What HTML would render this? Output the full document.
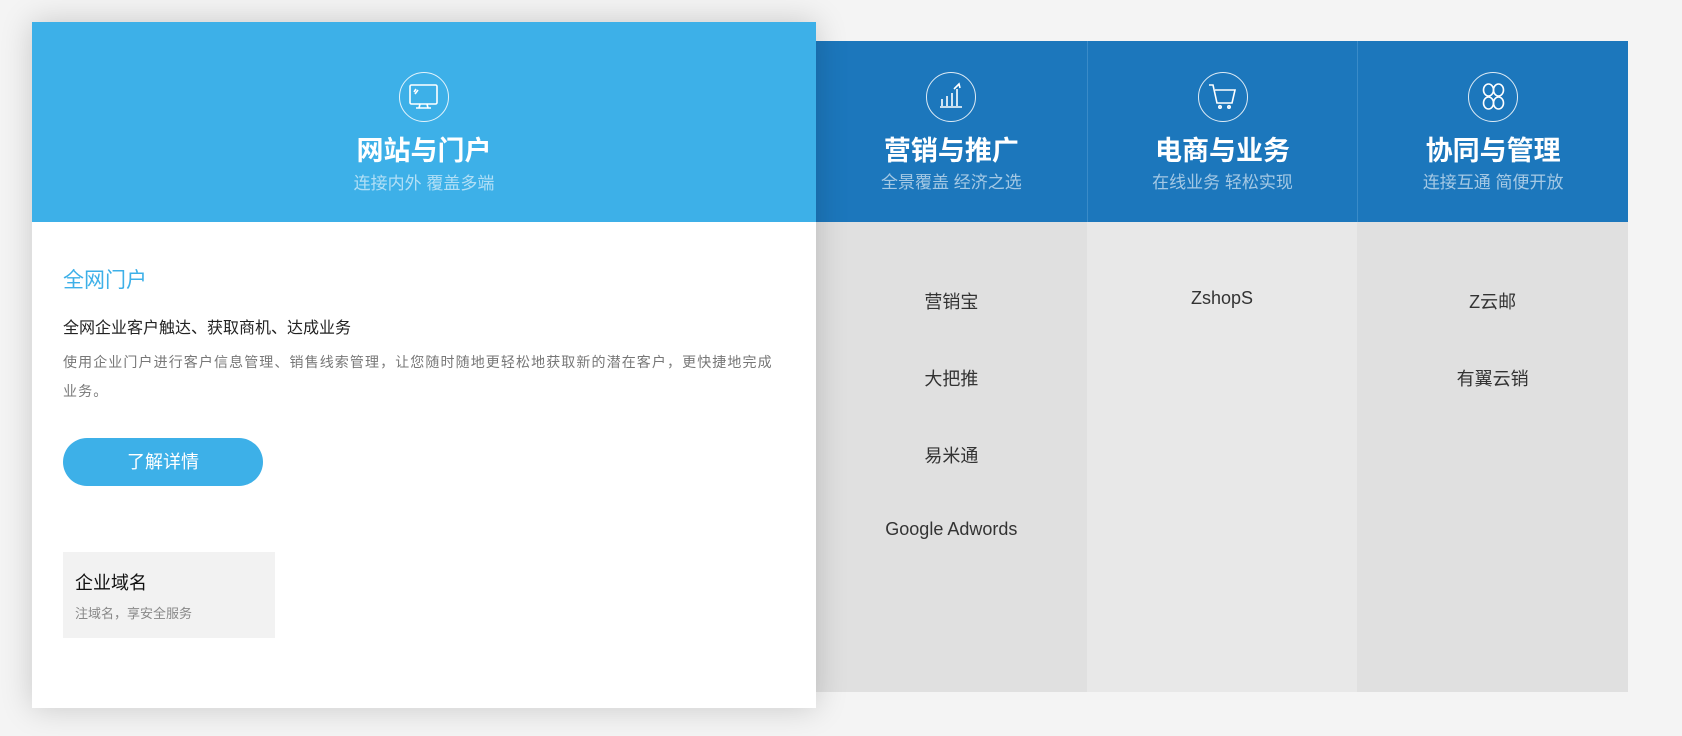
<!DOCTYPE html>
<html><head><meta charset="utf-8"><style>
*{margin:0;padding:0;box-sizing:border-box}
body{width:1682px;height:736px;background:#f4f4f4;font-family:"Liberation Sans","Noto Sans CJK SC",sans-serif;position:relative;overflow:hidden}
.cols{position:absolute;left:816px;top:41px;width:812px;height:651px;display:flex}
.col{width:271px;height:100%;position:relative}
.col .hd{height:181px;background:#1c77bc;border-left:1px solid #3a8bc8;text-align:center;color:#fff}
.col:first-child .hd{border-left:none}
.col .bd{height:470px;background:#e0e0e0;text-align:center;color:#333;font-size:18px;padding-top:66px}
.col.mid .bd{background:#e8e8e8}
.bd div{height:77px}
.icon{position:absolute;left:50%;top:31px;margin-left:-25px;width:50px;height:50px;border:1.5px solid rgba(255,255,255,.85);border-radius:50%}
.t{position:absolute;left:0;right:0;top:88px;font-size:27px;font-weight:bold;text-align:center;color:#fff}
.s{position:absolute;left:0;right:0;top:127px;font-size:17px;text-align:center;color:rgba(255,255,255,.6)}
.card{position:absolute;left:32px;top:22px;width:784px;height:686px;background:#fff;box-shadow:0 0 30px rgba(0,0,0,.18);z-index:2}
.card .hdr{height:200px;background:#3db0e8;position:relative}
.card .icon{top:50px}
.card .t{top:107px}
.card .s{top:147px}
</style></head><body>
<div class="cols">
 <div class="col"><div class="hd" style="position:relative">
  <div class="icon"><svg width="47" height="47" viewBox="0 0 47 47" fill="none" stroke="#fff" stroke-width="1.6"><path d="M12 34h22M14 33v-7M19 33v-10M24 33v-13M29 33v-17M26 16l5-5 1 4"/></svg></div>
  <div class="t">营销与推广</div><div class="s">全景覆盖 经济之选</div></div>
  <div class="bd"><div>营销宝</div><div>大把推</div><div>易米通</div><div>Google Adwords</div></div></div>
 <div class="col mid"><div class="hd" style="position:relative">
  <div class="icon"><svg width="47" height="47" viewBox="0 0 47 47" fill="none" stroke="#fff" stroke-width="1.6"><path d="M10 12h4l4 18h15l3-13H16"/><circle cx="21" cy="34" r="1.2"/><circle cx="30" cy="34" r="1.2"/></svg></div>
  <div class="t">电商与业务</div><div class="s">在线业务 轻松实现</div></div>
  <div class="bd"><div>ZshopS</div></div></div>
 <div class="col"><div class="hd" style="position:relative">
  <div class="icon"><svg width="47" height="47" viewBox="0 0 47 47" fill="none" stroke="#fff" stroke-width="1.6"><ellipse cx="18.5" cy="17" rx="5" ry="6"/><ellipse cx="28.5" cy="17" rx="5" ry="6"/><ellipse cx="18.5" cy="30" rx="5" ry="6"/><ellipse cx="28.5" cy="30" rx="5" ry="6"/></svg></div>
  <div class="t">协同与管理</div><div class="s">连接互通 简便开放</div></div>
  <div class="bd"><div>Z云邮</div><div>有翼云销</div></div></div>
</div>
<div class="card">
 <div class="hdr">
  <div class="icon"><svg width="47" height="47" viewBox="0 0 47 47" fill="none" stroke="#fff" stroke-width="1.6"><rect x="10" y="12" width="27" height="19" rx="1.5"/><path d="M20 31l-1 4h9l-1-4M16 35h15M14 19l2-3M15 21l3-4"/></svg></div>
  <div class="t">网站与门户</div><div class="s">连接内外 覆盖多端</div>
 </div>
 <div style="position:absolute;left:31px;top:242px;font-size:21px;color:#3db0e8">全网门户</div>
 <div style="position:absolute;left:31px;top:292px;font-size:16px;color:#222">全网企业客户触达、获取商机、达成业务</div>
 <div style="position:absolute;left:31px;top:326px;width:712px;font-size:14px;letter-spacing:1.1px;color:#777;line-height:29px">使用企业门户进行客户信息管理、销售线索管理，让您随时随地更轻松地获取新的潜在客户，更快捷地完成业务。</div>
 <div style="position:absolute;left:31px;top:416px;width:200px;height:48px;border-radius:24px;background:#3db0e8;color:#fff;font-size:18px;text-align:center;line-height:48px">了解详情</div>
 <div style="position:absolute;left:31px;top:530px;width:212px;height:86px;background:#f2f2f2">
  <div style="position:absolute;left:12px;top:17px;font-size:18px;color:#111">企业域名</div>
  <div style="position:absolute;left:12px;top:51px;font-size:13px;color:#888">注域名，享安全服务</div>
 </div>
</div>
</body></html>
